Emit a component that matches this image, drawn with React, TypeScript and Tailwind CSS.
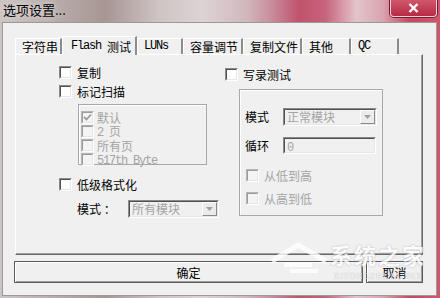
import type { ReactNode } from "react";

const CJK = "font-['Noto_Sans_CJK_SC',sans-serif]";
const MONO = "whitespace-pre font-['Liberation_Mono',monospace] text-[12px] tracking-[-1.2px]";

function Check({ disabled, checked }: { disabled?: boolean; checked?: boolean }) {
  return (
    <span
      className={`flex h-[13px] w-[13px] shrink-0 border border-b-white border-r-white ${
        disabled ? "border-t-[#b4b4b4] border-l-[#b4b4b4]" : "border-t-[#8a8a8a] border-l-[#8a8a8a]"
      }`}
    >
      <span
        className={`flex flex-1 items-center justify-center border border-b-[#e6e6e6] border-r-[#e6e6e6] ${
          disabled
            ? "border-t-[#9c9c9c] border-l-[#9c9c9c] bg-[#f4f4f4]"
            : "border-t-[#505050] border-l-[#505050] bg-white"
        }`}
      >
        {checked && (
          <svg width="9" height="9" viewBox="0 0 9 9">
            <path d="M1 4 L3.5 6.5 L8 1.5" fill="none" stroke="#9a9a9a" strokeWidth="1.8" />
          </svg>
        )}
      </span>
    </span>
  );
}

function CheckRow({
  label,
  disabled,
  checked,
  gap = "gap-[5px]",
  className = "",
}: {
  label: ReactNode;
  disabled?: boolean;
  checked?: boolean;
  gap?: string;
  className?: string;
}) {
  return (
    <div className={`flex h-[13px] items-center leading-[13px] ${gap} ${className}`}>
      <Check disabled={disabled} checked={checked} />
      <span className={`whitespace-nowrap text-[12px] ${disabled ? "text-[#a4a4a4]" : "text-black"}`}>{label}</span>
    </div>
  );
}

function Combo({ text, width }: { text: string; width: string }) {
  return (
    <div className={`flex h-[18px] ${width} border border-t-[#8a8a8a] border-l-[#8a8a8a] border-b-white border-r-white`}>
      <div className="flex flex-1 border border-t-[#505050] border-l-[#505050] border-b-[#e6e6e6] border-r-[#e6e6e6] bg-[#f0f0f0]">
        <span className="flex-1 whitespace-nowrap pl-[2px] text-[12px] leading-[14px] text-[#a4a4a4]">{text}</span>
        <span className="flex w-[15px] items-center justify-center border border-t-white border-l-white border-b-[#8a8a8a] border-r-[#8a8a8a] bg-[#ececec]">
          <svg width="7" height="4" viewBox="0 0 7 4">
            <path d="M0 0 H7 L3.5 4 Z" fill="#a0a0a0" />
          </svg>
        </span>
      </div>
    </div>
  );
}

const tabs = [
  { label: "字符串", w: "w-[47px]" },
  { label: <><span className={MONO}>{"Flash "}</span>测试</>, w: "w-[75px]", active: true },
  { label: <span className={MONO}>LUNs</span>, w: "w-[46px]" },
  { label: "容量调节", w: "w-[60px]" },
  { label: "复制文件", w: "w-[59px]" },
  { label: "其他", w: "w-[49px]" },
  { label: <span className={MONO}>QC</span>, w: "w-[48px]" },
];

export default function App() {
  return (
    <div
      className={`relative flex h-[298px] w-[440px] flex-col overflow-hidden bg-[linear-gradient(90deg,#cbc5c3_0%,#b8adab_12%,#a89694_24%,#cdc4c4_36%,#dcd3d5_46%,#d2b8be_56%,#c88a9a_62%,#c0526c_68%,#c6647c_74%,#e4c4cb_81%,#d9a4b0_87%,#c64962_93%,#d0566e_100%)] ${CJK}`}
    >
      {/* title bar */}
      <div className="flex h-[22px] shrink-0 items-start">
        <span className="ml-[3px] mt-[2px] text-[13px] leading-[16px] text-black [text-shadow:0_0_6px_#f4eeee]">
          选项设置...
        </span>
        <div className="ml-auto mr-[3px] flex h-[17px] w-[47px] items-center justify-center rounded-b-[4px] border border-t-0 border-[#f0d0d6] bg-[linear-gradient(#d0586c,#b52a44)] shadow-[0_0_0_1px_#7a1a2c]">
          <svg width="11" height="10" viewBox="0 0 11 10">
            <path d="M1.5 1 L9.5 9 M9.5 1 L1.5 9" stroke="#ffffff" strokeWidth="2.4" />
          </svg>
        </div>
      </div>

      {/* client area */}
      <div className="ml-[2px] flex h-[274px] w-[435px] flex-col border border-[#9a9a9a] bg-[#f0f0f0]">
        {/* tabs */}
        <div className="ml-[12px] mt-[13px] flex h-[18px] items-end">
          {tabs.map((t, i) => (
            <div
              key={i}
              className={`flex ${t.w} items-center whitespace-nowrap border-l border-t border-r-2 border-l-white border-t-white border-r-[#8c8c8c] pl-[6px] text-[12px] leading-[13px] text-black ${
                t.active ? "relative z-10 -mb-px h-[19px] bg-[#f0f0f0] pl-[8px]" : "h-[16px]"
              }`}
            >
              {t.label}
            </div>
          ))}
        </div>

        {/* panel */}
        <div className="ml-[12px] flex h-[201px] w-[408px] border border-t-white border-l-white border-b-[#696969] border-r-[#696969] shadow-[inset_-1px_-1px_0_#a0a0a0]">
          {/* left column */}
          <div className="flex w-[209px] shrink-0 flex-col pl-[43px] pt-[11px]">
            <CheckRow label="复制" />
            <CheckRow label="标记扫描" className="mt-[6px]" />
            <div className="ml-[19px] mt-[6px] flex h-[61px] w-[129px] flex-col gap-[1px] border border-[#a8a8a8] pl-[2px] pt-[6px] shadow-[inset_1px_1px_0_#fff]">
              <CheckRow label="默认" disabled checked gap="gap-[3px]" />
              <CheckRow label={<><span className={MONO}>{"2 "}</span>页</>} disabled gap="gap-[3px]" />
              <CheckRow label="所有页" disabled gap="gap-[3px]" />
              <CheckRow label={<span className={MONO}>517th Byte</span>} disabled gap="gap-[3px]" />
            </div>
            <CheckRow label="低级格式化" className="mt-[13px]" />
            <div className="ml-[18px] mt-[9px] flex items-center">
              <span className="w-[51px] whitespace-nowrap text-[12px] leading-[14px] text-black">模式 ：</span>
              <Combo text="所有模块" width="w-[91px]" />
            </div>
          </div>

          {/* right column */}
          <div className="flex flex-col pt-[13px]">
            <CheckRow label="写录测试" />
            <div className="ml-[14px] mt-[8px] flex h-[127px] w-[144px] flex-col border border-[#a8a8a8] pl-[5px] pt-[18px] shadow-[inset_1px_1px_0_#fff]">
              <div className="flex items-center">
                <span className="w-[38px] text-[12px] leading-[14px] text-black">模式</span>
                <Combo text="正常模块" width="w-[94px]" />
              </div>
              <div className="mt-[11px] flex items-center">
                <span className="w-[38px] text-[12px] leading-[14px] text-black">循环</span>
                <div className="flex h-[17px] w-[93px] border border-t-[#8a8a8a] border-l-[#8a8a8a] border-b-white border-r-white">
                  <div className="flex-1 border border-t-[#505050] border-l-[#505050] border-b-[#e6e6e6] border-r-[#e6e6e6] bg-[#f0f0f0] pl-[2px] text-[12px] leading-[13px] text-[#a4a4a4]">
                    <span className={MONO}>0</span>
                  </div>
                </div>
              </div>
              <CheckRow label="从低到高" disabled className="ml-[1px] mt-[15px]" />
              <CheckRow label="从高到低" disabled className="ml-[1px] mt-[10px]" />
            </div>
          </div>
        </div>

        {/* buttons */}
        <div className="ml-[11px] mt-[6px] flex gap-[3px]">
          <button className="flex h-[22px] w-[349px] items-center justify-center border border-[#5a5a5a] bg-[#f0f0f0] text-[12px] leading-[13px] text-black shadow-[inset_1px_1px_0_#fff,inset_-1px_-1px_0_#a0a0a0]">
            确定
          </button>
          <button className="flex h-[22px] w-[57px] items-center justify-center border border-[#5a5a5a] bg-[#f0f0f0] text-[12px] leading-[13px] text-black shadow-[inset_1px_1px_0_#fff,inset_-1px_-1px_0_#a0a0a0]">
            取消
          </button>
        </div>
      </div>

      {/* watermark */}
      <div className="pointer-events-none absolute left-[268px] top-[241px] flex items-start opacity-80">
        <svg width="62" height="36" viewBox="0 0 62 36">
          <path d="M4 20 L30 4 L58 20" fill="none" stroke="#ffffff" strokeWidth="5" />
          <path d="M16 24 H44 M22 30 H50" stroke="#ffffff" strokeWidth="4" />
        </svg>
        <div className="flex flex-col items-center">
          <span className="text-[22px] font-bold leading-[26px] tracking-[2px] text-white [text-shadow:0_0_2px_#a0a0a0]">
            系统之家
          </span>
          <span className="mt-[6px] font-['Liberation_Serif',serif] text-[8px] leading-[8px] tracking-[1px] text-white [text-shadow:0_0_1px_#888]">
            XITONGZHIJIA.NET
          </span>
        </div>
      </div>
    </div>
  );
}
